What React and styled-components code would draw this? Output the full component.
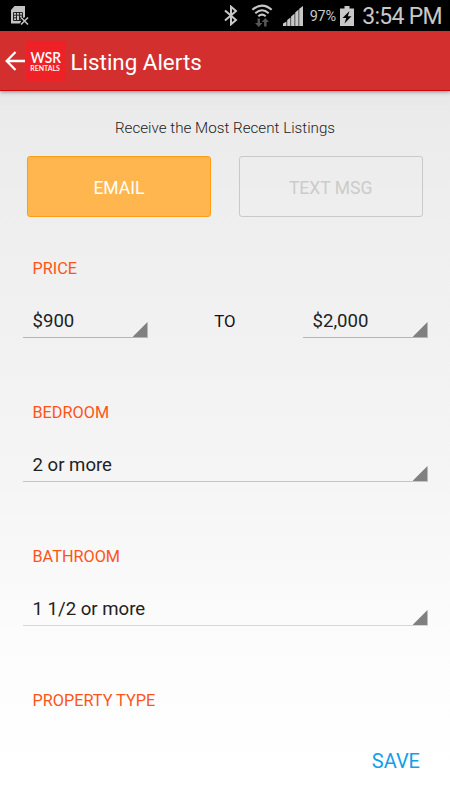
import React, { useState } from "react";
import styled, { createGlobalStyle } from "styled-components";

export default function App() {

    const [alertType, setAlertType] = useState("email")

    return (
        <Screen>
            <GlobalStyle />
            <StatusBar>
                <SimIcon />
                <StatusIcons>
                    <BluetoothIcon />
                    <WifiIcon />
                    <SignalIcon />
                    <BatteryPercent>97%</BatteryPercent>
                    <BatteryIcon />
                    <Clock>3:54 PM</Clock>
                </StatusIcons>
            </StatusBar>

            <Toolbar>
                <BackIcon />
                <Logo>
                    <LogoTitle>WSR</LogoTitle>
                    <LogoSubtitle>RENTALS</LogoSubtitle>
                </Logo>
                <Title>Listing Alerts</Title>
            </Toolbar>

            <Content>
                <Intro>Receive the Most Recent Listings</Intro>
                <ToggleRow>
                    <ToggleButton $active={alertType === "email"} onClick={() => setAlertType("email")}>EMAIL</ToggleButton>
                    <ToggleButton $active={alertType === "text"} onClick={() => setAlertType("text")}>TEXT MSG</ToggleButton>
                </ToggleRow>

                <Section>
                    <SectionLabel>PRICE</SectionLabel>
                    <PriceRow>
                        <Spinner value="$900" />
                        <ToText>TO</ToText>
                        <Spinner value="$2,000" />
                    </PriceRow>
                </Section>
                <Section>
                    <SectionLabel>BEDROOM</SectionLabel>
                    <Spinner value="2 or more" $line="#c4c4c4" />
                </Section>
                <Section>
                    <SectionLabel>BATHROOM</SectionLabel>
                    <Spinner value="1 1/2 or more" $line="#d6d6d6" />
                </Section>
                <SectionLabel>PROPERTY TYPE</SectionLabel>
            </Content>

            <Footer>
                <SaveButton>SAVE</SaveButton>
            </Footer>
        </Screen>
    )
}

//android style dropdown, underlined with a corner triangle
function Spinner({ value, $line }) {
    return (
        <SpinnerBox $line={$line}>
            <span>{value}</span>
            <Corner />
        </SpinnerBox>
    )
}

function SimIcon() {
    return (
        <svg width="19" height="21" viewBox="0 0 19 21">
            <path d="M4.5 1H15V12L11 15V18.5H1V5Z" fill="#c3c3c3" />
            <path d="M3.5 7.5H12.5V15.5H3.5ZM3.5 10.2H6.5M3.5 12.8H6.5M6.5 7.5V15.5M9.5 7.5V15.5M6.5 10.2H12.5M9.5 12.8H12.5" fill="none" stroke="#222" strokeWidth="1" />
            <path d="M10.8 12.5L18 19.5M18 12.5L10.8 19.5" stroke="#000" strokeWidth="3.4" />
            <path d="M11 12.5L18 19.5M18 12.5L11 19.5" stroke="#c3c3c3" strokeWidth="1.6" />
        </svg>
    )
}

function BluetoothIcon() {
    return (
        <svg width="14" height="21" viewBox="0 0 14 21">
            <path d="M1 5.5L12 15L7 19.3V1.7L12 6L1 15.5" fill="none" stroke="#c8c8c8" strokeWidth="2" />
        </svg>
    )
}

function WifiIcon() {
    return (
        <svg width="22" height="24" viewBox="0 0 22 24">
            <g fill="none" stroke="#c8c8c8" strokeWidth="2">
                <path d="M1.3 5.8Q11 -2.5 20.7 5.8" />
                <path d="M4.3 9.2Q11 3.3 17.7 9.2" />
                <path d="M7.3 12.3Q11 9 14.7 12.3" />
            </g>
            <path d="M6.5 14.5H9V19H11.5L7.8 23L4 19H6.5ZM13.1 22.5H15.6V18H18L14.3 14L10.7 18H13.1Z" fill="#575757" />
        </svg>
    )
}

function SignalIcon() {
    return (
        <svg width="20" height="20" viewBox="0 0 20 20">
            <path d="M0 20V17.5L3.5 15.5V20ZM4.2 20V14L7.5 11.5V20ZM8.1 20V10.5L11.6 7.5V20ZM12.2 20V6.5L15.6 3.5V20ZM16.2 20V2.7L20 0V20Z" fill="#c8c8c8" />
        </svg>
    )
}

function BatteryIcon() {
    return (
        <svg width="14" height="20" viewBox="0 0 14 20">
            <path d="M4.5 0H9.5V2.5H14V20H0V2.5H4.5Z" fill="#c8c8c8" />
            <path d="M9.5 5L2.5 12H6.2L4.5 17.5L11.5 10.3H7.8Z" fill="#000" />
        </svg>
    )
}

function BackIcon() {
    return (
        <svg width="20" height="20" viewBox="0 0 20 20">
            <path d="M10.5 1L1.7 10L10.5 19M2 10H20" fill="none" stroke="#fff" strokeWidth="2.3" />
        </svg>
    )
}

const GlobalStyle = createGlobalStyle`
    * {
        box-sizing: border-box;
    }

    body {
        margin: 0;
        font-family: Roboto, sans-serif;
    }
`

const Screen = styled.div`
    display: flex;
    flex-direction: column;
    width: 450px;
    height: 800px;
    overflow: hidden;
    background: linear-gradient(#e6e6e6 80px, #ebebeb 115px, #eeeeee 200px, #f1f1f1 320px, #f5f5f5 480px, #fcfcfc 640px, #ffffff 780px);
`

const StatusBar = styled.div`
    display: flex;
    align-items: center;
    justify-content: space-between;
    height: 31px;
    padding: 0 8px 0 10px;
    background: #000;
    color: #c8c8c8;
`

const StatusIcons = styled.div`
    display: flex;
    align-items: center;

    svg:nth-of-type(2) {
        margin: 1px 0 0 13px;
    }

    svg:nth-of-type(3) {
        margin-left: 10px;
    }
`

const BatteryPercent = styled.span`
    margin: 2px 4px 0 7px;
    font-size: 14.5px;
    letter-spacing: -0.3px;
`

const Clock = styled.span`
    margin-left: 8.5px;
    font-size: 23px;
    line-height: 31px;
    padding-top: 2px;
    letter-spacing: -0.7px;
`

const Toolbar = styled.div`
    display: flex;
    flex-shrink: 0;
    align-items: center;
    height: 60px;
    padding-left: 5px;
    background: #d32f2f;
    border-bottom: 1px solid #c90b08;
    box-shadow: 0 1px 4px rgba(0, 0, 0, 0.4);
`

const Logo = styled.div`
    display: flex;
    flex-direction: column;
    align-items: center;
    width: 40px;
    height: 40px;
    margin-left: 1px;
    padding: 6px 1px 0 0;
    background: #ee2226;
    color: #fff;
    font-family: Lato, sans-serif;
    white-space: nowrap;
`

const LogoTitle = styled.div`
    font-size: 16px;
    font-weight: 600;
    line-height: 19px;
    transform: scaleX(0.86);
`

const LogoSubtitle = styled.div`
    margin-top: -3px;
    font-size: 8px;
    font-weight: 600;
    line-height: 10px;
    transform: scaleX(0.87);
`

const Title = styled.h1`
    margin: 2px 0 0 4.5px;
    color: #fff;
    font-size: 22.4px;
    font-weight: 400;
`

const Content = styled.div`
    flex: 1;
    padding: 24px 22.5px 0;
`

const Intro = styled.div`
    color: #222;
    font-size: 15.2px;
    font-weight: 300;
    line-height: 26px;
    text-align: center;
`

const ToggleRow = styled.div`
    display: grid;
    grid-template-columns: 1fr 1fr;
    gap: 28px;
    margin: 15px 5px 37px 4.5px;
`

const ToggleButton = styled.button`
    height: 61px;
    padding: 2px 0 0;
    border: 1.5px solid ${({ $active }) => ($active ? "#ff9e16" : "#c9c9c9")};
    border-radius: 3px;
    background: ${({ $active }) => ($active ? "#ffb64f" : "transparent")};
    color: ${({ $active }) => ($active ? "#fff" : "#cbcbcb")};
    font-family: inherit;
    font-size: 17.5px;
`

const Section = styled.div`
    height: 144px;
`

const SectionLabel = styled.div`
    margin-bottom: 21px;
    padding-left: 10px;
    color: #ff5419;
    font-size: 16.25px;
    line-height: 30px;
`

const PriceRow = styled.div`
    display: grid;
    grid-template-columns: 125px 1fr 125px;
    align-items: center;
`

const SpinnerBox = styled.div`
    display: flex;
    align-items: flex-end;
    justify-content: space-between;
    height: 33px;
    padding-left: 10px;
    border-bottom: 1px solid ${({ $line }) => $line || "#b4b4b4"};
    color: #222;
    font-size: 18.6px;
    line-height: 32px;
`

const Corner = styled.div`
    width: 15px;
    height: 15px;
    background: #808080;
    clip-path: polygon(100% 0, 100% 100%, 0 100%);
`

const ToText = styled.div`
    padding-bottom: 2px;
    color: #111;
    font-size: 16.8px;
    text-align: center;
`

const Footer = styled.div`
    display: flex;
    justify-content: flex-end;
    height: 60px;
    padding-right: 30px;
`

const SaveButton = styled.button`
    height: 40px;
    padding: 2px 0 0;
    border: none;
    background: none;
    color: #109fe9;
    font-family: inherit;
    font-size: 20px;
`
